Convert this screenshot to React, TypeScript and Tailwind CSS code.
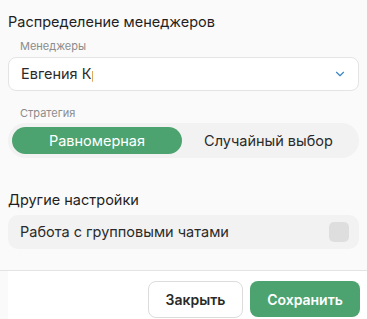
import { ChevronDown } from 'lucide-react';

export default function App() {
  return (
    <div
      className="w-[367px] h-[319px] overflow-hidden flex flex-col bg-[#fafafa] text-[#222]"
      style={{ fontFamily: 'Inter, "Noto Sans", sans-serif' }}
    >
      <div className="flex-1 px-2 pt-[12px]">
        <h2 className="text-[14.5px] leading-[20px] font-normal text-[#1f1f1f]">Распределение менеджеров</h2>

        {/* Менеджеры */}
        <div className="mt-[6px] pl-3 text-[11px] leading-[16px] text-[#8c8c8c]">Менеджеры</div>
        <div className="mt-[3px] h-[34px] flex items-center justify-between rounded-lg border border-[#e4e4e4] bg-white pl-3 pr-[11px]">
          <span className="block w-[72px] overflow-hidden whitespace-nowrap text-[14.5px] text-[#2a2a2a]">
            Евгения Кр
          </span>
          <ChevronDown size={14} strokeWidth={2} className="text-[#3a86c8]" />
        </div>

        {/* Стратегия */}
        <div className="mt-[14px] pl-3 text-[11px] leading-[16px] text-[#8c8c8c]">Стратегия</div>
        <div className="mt-[2px] h-[35px] flex rounded-full bg-[#f2f2f2] p-1">
          <button className="w-[170px] rounded-full bg-[#4ca36f] text-[14.5px] text-white">Равномерная</button>
          <button className="flex-1 rounded-full text-[14.5px] text-[#2a2a2a]">Случайный выбор</button>
        </div>

        {/* Другие настройки */}
        <h3 className="mt-[32px] text-[14.5px] leading-[20px] font-normal text-[#1f1f1f]">Другие настройки</h3>
        <div className="mt-[5px] h-[34px] flex items-center justify-between rounded-[10px] bg-[#f2f2f2] pl-3 pr-[10px]">
          <span className="text-[14.5px] text-[#2a2a2a]">Работа с групповыми чатами</span>
          <span className="w-[20px] h-[20px] rounded-[5px] bg-[#dedede]" />
        </div>
      </div>

      <div className="h-[49px] shrink-0 border-t border-[#e3e3e3] flex">
        <div className="ml-2 flex-1 bg-white flex justify-end items-start gap-[7px] pt-[10px] pr-[7px]">
          <button className="w-[95px] h-[37px] rounded-lg border border-[#dcdcdc] bg-white text-[14px] font-semibold text-[#2a2a2a]">
            Закрыть
          </button>
          <button className="w-[110px] h-[36px] rounded-lg bg-[#4ca36f] text-[14px] font-semibold text-white">
            Сохранить
          </button>
        </div>
      </div>
    </div>
  );
}
